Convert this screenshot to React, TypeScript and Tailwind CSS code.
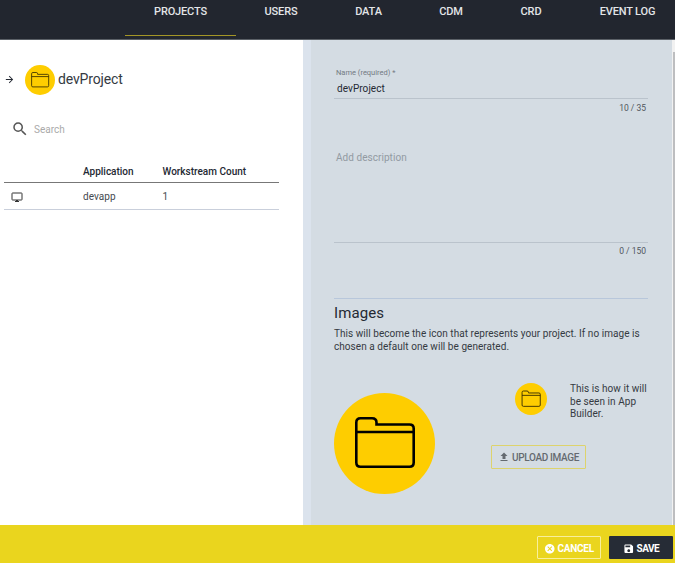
import React from "react";
import { MdArrowForward, MdSearch, MdFileUpload, MdCancel, MdSave } from "react-icons/md";

function FolderIcon({ className, strokeWidth, stroke = "#000" }: { className: string; strokeWidth: number; stroke?: string }) {
  return (
    <svg viewBox="0 0 101 101" className={className}>
      <circle cx="50.5" cy="50.5" r="50.5" fill="#fecd00" />
      <path
        d="M22.3 69.5V29.5Q22.3 25.3 26.5 25.3H38Q42.5 25.3 42.5 29.5V31.5H75.5Q79.7 31.5 79.7 35.5V69.5Q79.7 73.7 75.5 73.7H26.5Q22.3 73.7 22.3 69.5ZM22.3 39H79.7"
        fill="none"
        stroke={stroke}
        strokeWidth={strokeWidth}
      />
    </svg>
  );
}

function Tab({ label, className }: { label: string; className: string }) {
  return (
    <div className={"h-9 shrink-0 whitespace-nowrap border-b text-center pt-1 tracking-[-0.15px] " + className}>{label}</div>
  );
}

export default function App() {
  return (
    <div className="flex h-[563px] w-[675px] flex-col overflow-hidden bg-white font-['Roboto',sans-serif] text-[#242933]">
      <nav className="flex h-10 shrink-0 overflow-hidden border-b border-[#5b6067] bg-[#22262f] pl-[125px] text-[11px] font-medium leading-4 text-[#e3e5e8]">
        <Tab label="PROJECTS" className="w-[111px] border-[#a39527]" />
        <Tab label="USERS" className="w-[90px] border-transparent" />
        <Tab label="DATA" className="w-[85px] border-transparent" />
        <Tab label="CDM" className="w-[80px] border-transparent" />
        <Tab label="CRD" className="w-[80px] border-transparent" />
        <Tab label="EVENT LOG" className="w-[113px] border-transparent" />
      </nav>

      <main className="flex h-[485px] shrink-0">
        <section className="w-[303px] shrink-0 pl-1">
          <div className="mt-[25px] flex h-[30px] items-center">
            <MdArrowForward className="mb-px size-[11px]" />
            <FolderIcon className="ml-[10px] size-[30px]" strokeWidth={2.8} stroke="#332a00" />
            <h1 className="mb-[3px] ml-[3px] text-[14px] leading-5 tracking-[-0.15px] text-[#353a42]">devProject</h1>
          </div>
          <div className="mt-[25px] flex h-[18px] items-center pl-[7px]">
            <MdSearch className="size-[18px] text-[#555]" />
            <span className="ml-[5px] pt-px text-[10px] leading-4 text-[#aaa]">Search</span>
          </div>
          <div className="mt-[19px] w-[275px] text-[10px]">
            <div className="flex h-[26px] items-center border-b border-[#777] pt-1 font-medium">
              <span className="w-[79px]" />
              <span className="w-[79.5px]">Application</span>
              <span>Workstream Count</span>
            </div>
            <div className="flex h-[27px] items-center border-b border-[#c9cfdb] text-[#454a50]">
              <span className="flex w-[79px] pl-[7px] pt-[2px]">
                <svg viewBox="0 0 12 11" className="h-[11px] w-3 text-[#333]">
                  <rect x="1" y="1" width="10" height="7" rx=".5" fill="none" stroke="currentColor" strokeWidth="1" />
                  <path d="M5 8h2v1h1v1H4V9h1z" fill="currentColor" />
                </svg>
              </span>
              <span className="w-[79.5px] tracking-[0.05px]">devapp</span>
              <span>1</span>
            </div>
          </div>
        </section>

        <div className="w-2 shrink-0 bg-[#dbe3ed]" />

        <section className="w-[361px] shrink-0 bg-[#d4dce3] pl-[23px] pr-6">
          <div className="h-[59px] border-b border-[#bac3cc] pt-[27px]">
            <div className="pl-[2px] text-[7.5px] leading-[11px] text-[#737a82]">Name (required) *</div>
            <div className="pl-[3px] pt-1 text-[10px] leading-[14px] tracking-[0.06px]">devProject</div>
          </div>
          <div className="pr-[2px] pt-[3px] text-right text-[8.5px] leading-3 text-[#50565d]">10 / 35</div>
          <div className="mt-[37px] h-[92px] border-b border-[#bac3cc] pl-[2px] text-[10px] leading-[14px] tracking-[0.05px] text-[#929aa2]">
            Add description
          </div>
          <div className="pr-[2px] pt-[2px] text-right text-[8.5px] leading-3 text-[#50565d]">0 / 150</div>
          <div className="mt-[41px] w-[314px] border-t border-[#b8c7db]" />
          <h2 className="pt-1 text-[15px] leading-5 tracking-[0.1px]">Images</h2>
          <p className="w-[314px] whitespace-nowrap pt-[5px] text-[10px] leading-[12.5px] tracking-[0.045px] text-[#353a42]">
            This will become the icon that represents your project. If no image is
            <br />
            chosen a default one will be generated.
          </p>
          <div className="flex">
            <FolderIcon className="mt-10 size-[101px] shrink-0" strokeWidth={2.6} />
            <div className="ml-14 mt-[29px] w-[160px] shrink-0">
              <div className="flex pl-6">
                <FolderIcon className="mt-px size-[32px] shrink-0" strokeWidth={2.8} stroke="#332a00" />
                <p className="ml-[23px] whitespace-nowrap pt-px text-[10px] leading-[12.5px] tracking-[0.05px] text-[#353a42]">
                  This is how it will
                  <br />
                  be seen in App
                  <br />
                  Builder.
                </p>
              </div>
              <button className="mt-6 flex h-6 w-[95px] items-center rounded-[1px] border border-[#ddd36d] pl-[6px] text-[10px] font-medium text-[#646a70]">
                <MdFileUpload className="mr-[2px] size-3" />
                <span className="whitespace-nowrap pt-px tracking-[-0.35px]">UPLOAD IMAGE</span>
              </button>
            </div>
          </div>
        </section>
        <div className="w-[3px] shrink-0 bg-[#f1f1f1] pl-px pt-3">
          <div className="h-[473px] bg-[#bdbec0]" />
        </div>
      </main>

      <footer className="flex h-[38px] shrink-0 items-start justify-end bg-[#ead51e] pr-[2px] pt-[11px] text-[10px] font-bold text-white">
        <button className="flex h-[23px] w-16 items-center rounded-[1px] border border-[#f8ef9c] pl-[6px]">
          <MdCancel className="mr-[2px] mt-[2px] size-[11.5px]" />
          <span className="pt-px tracking-[-0.25px]">CANCEL</span>
        </button>
        <button className="ml-2 flex h-[23px] w-16 items-center rounded-[1px] bg-[#262c36] pl-[14px]">
          <MdSave className="mr-[2px] mt-[2px] size-[11.5px]" />
          <span className="pt-px tracking-[-0.5px]">SAVE</span>
        </button>
      </footer>
    </div>
  );
}
